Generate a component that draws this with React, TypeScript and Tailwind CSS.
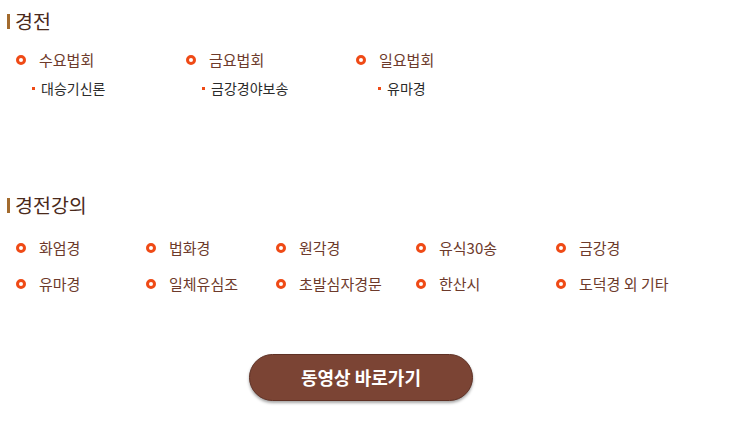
import React from 'react';

const font = { fontFamily: '"Noto Sans CJK KR", "Noto Sans", sans-serif' };

const services = [
  { name: '수요법회', sub: '대승기신론', subPad: 'pl-[16px]' },
  { name: '금요법회', sub: '금강경야보송', subPad: 'pl-[16px]' },
  { name: '일요법회', sub: '유마경', subPad: 'pl-[22px]' },
];

const lectures = [
  ['화엄경', '법화경', '원각경', '유식30송', '금강경'],
  ['유마경', '일체유심조', '초발심자경문', '한산시', '도덕경 외 기타'],
];

const lectureCols = ['w-[130px]', 'w-[130px]', 'w-[140px]', 'w-[140px]', 'w-[140px]'];

function SectionTitle({ children }: { children: React.ReactNode }) {
  return (
    <div className="flex items-center h-[20px] pl-[7px]">
      <span className="w-[3px] h-[15px] bg-[#a36b2e]" />
      <span className="ml-[5px] text-[19.5px] leading-[20px] text-[#4a2a1b]">{children}</span>
    </div>
  );
}

function Ring() {
  return <span className="w-[10px] h-[10px] rounded-full border-[3px] border-[#ef4a16] shrink-0" />;
}

export default function App() {
  return (
    <div className="w-[734px] h-[431px] bg-white pt-[11px]" style={font}>
      {/* 경전 */}
      <SectionTitle>경전</SectionTitle>
      <div className="flex pl-[16px] mt-[19px]">
        {services.map((s) => (
          <div key={s.name} className="w-[170px]">
            <div className="flex items-center h-[20px]">
              <Ring />
              <span className="ml-[13px] text-[15px] text-[#6d3a2b] leading-[20px]">{s.name}</span>
            </div>
            <div className={`flex items-center h-[20px] mt-[8px] ${s.subPad}`}>
              <span className="w-[3px] h-[3px] bg-[#ef4a16]" />
              <span className="ml-[6px] text-[14px] text-[#2a2a2a] leading-[20px]">{s.sub}</span>
            </div>
          </div>
        ))}
      </div>

      {/* 경전강의 */}
      <div className="mt-[97px]">
        <SectionTitle>경전강의</SectionTitle>
      </div>
      <div className="flex flex-col gap-[16px] pl-[16px] mt-[23px]">
        {lectures.map((row, r) => (
          <div key={r} className="flex">
            {row.map((name, i) => (
              <div key={name} className={`flex items-center h-[20px] ${lectureCols[i]}`}>
                <Ring />
                <span className="ml-[13px] text-[15px] text-[#6d3a2b] leading-[20px] whitespace-nowrap">{name}</span>
              </div>
            ))}
          </div>
        ))}
      </div>

      <div className="flex pl-[249px] mt-[60px]">
        <button className="w-[224px] h-[47px] rounded-full bg-[#7b4434] border border-[#5f3125] shadow-[0_2px_3px_rgba(0,0,0,0.35)] text-white text-[18px] font-bold">
          동영상 바로가기
        </button>
      </div>
    </div>
  );
}
